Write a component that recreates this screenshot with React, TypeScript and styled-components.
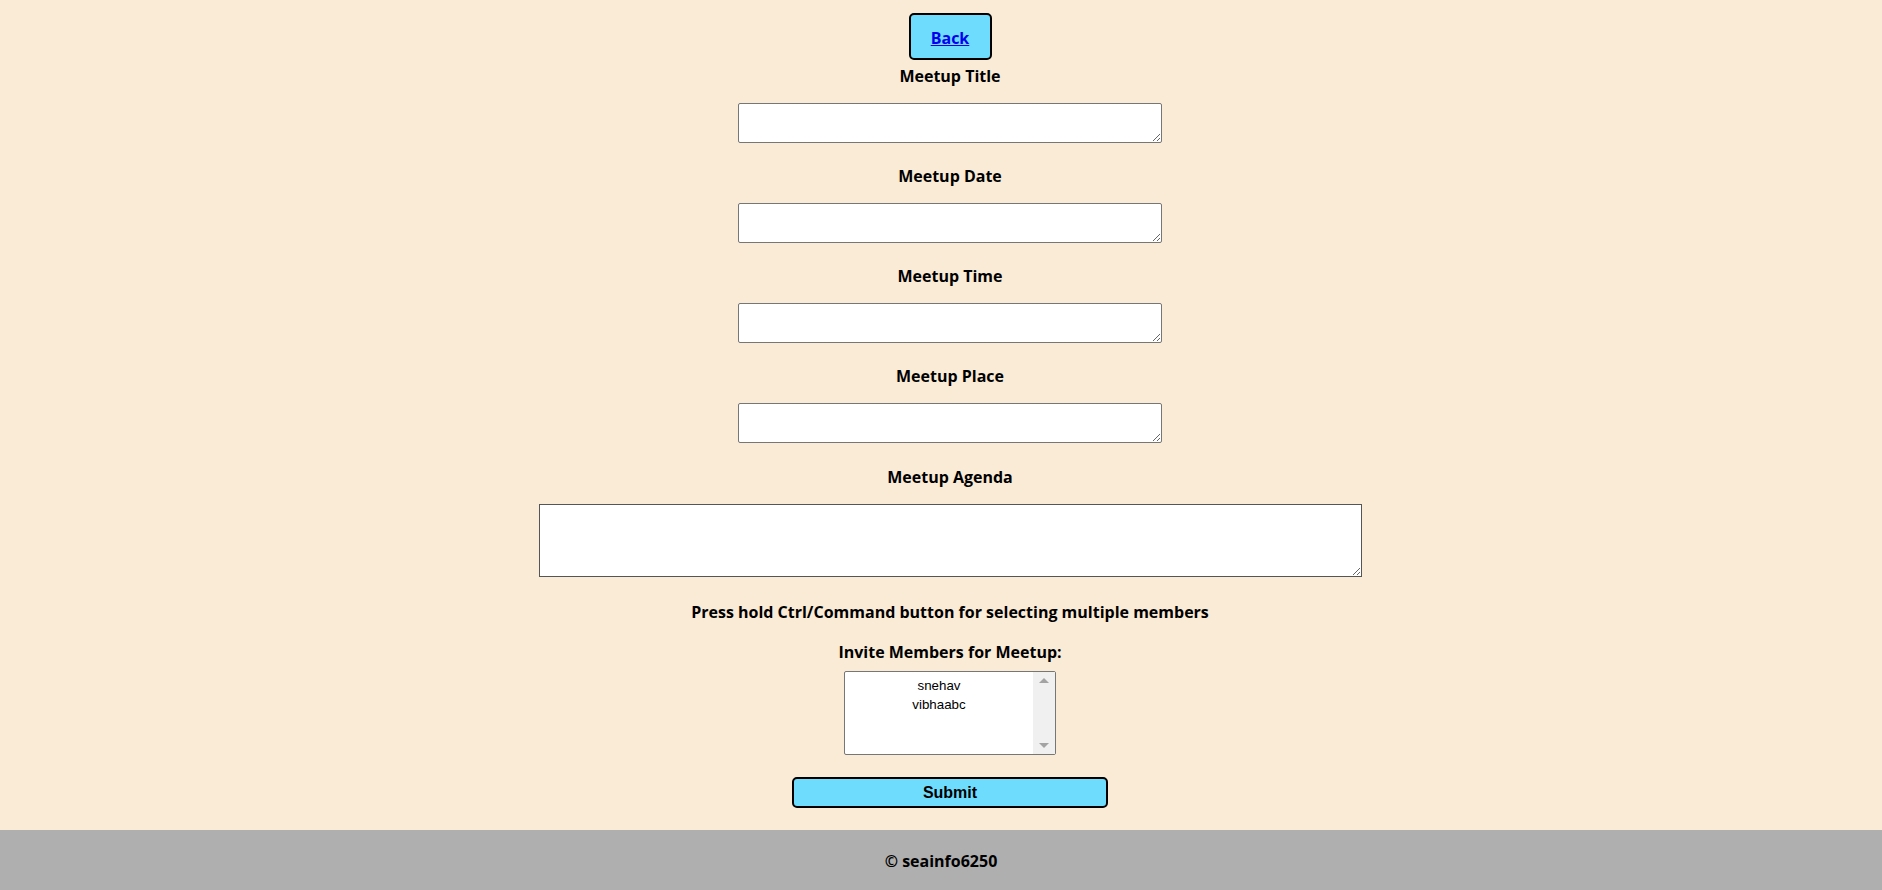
import React from "react";
import styled, { createGlobalStyle } from "styled-components";

const GlobalStyle = createGlobalStyle`
  html, body { margin: 0; padding: 0; }
  body {
    background: #faebd7;
    font-family: "Open Sans", "Noto Sans", sans-serif;
    color: #000;
  }
`;

const Page = styled.div`
  display: flex;
  flex-direction: column;
  min-height: 890px;
`;

const Main = styled.main`
  flex: 1;
  display: flex;
  flex-direction: column;
  align-items: center;
  padding: 13px 0 22px 18px;
`;

const BackButton = styled.button`
  width: 83px;
  height: 47px;
  box-sizing: border-box;
  background: #6edcfc;
  border: 2px solid #000;
  border-radius: 5px;
  display: flex;
  align-items: center;
  justify-content: center;
  padding: 2px 0 0;
  cursor: pointer;
`;

const BackLink = styled.a`
  font-family: "Open Sans", "Noto Sans", sans-serif;
  font-weight: 700;
  font-size: 16px;
  color: #0000ee;
  text-decoration: underline;
`;

const Label = styled.label<{ $top: number }>`
  display: block;
  margin-top: ${(p) => p.$top}px;
  height: 20px;
  line-height: 20px;
  font-weight: 700;
  font-size: 16px;
  text-align: center;
`;

const Field = styled.textarea<{ $wide?: boolean }>`
  box-sizing: border-box;
  margin-top: 17px;
  width: ${(p) => (p.$wide ? 823 : 424)}px;
  height: ${(p) => (p.$wide ? 73 : 40)}px;
  border: 1px solid ${(p) => (p.$wide ? "#555" : "#767676")};
  border-radius: ${(p) => (p.$wide ? 0 : 2)}px;
  background: #fff;
  font-family: monospace;
  font-size: 13px;
  display: block;
`;

const SelectBox = styled.div`
  margin-top: 9px;
  width: 212px;
  height: 84px;
  box-sizing: border-box;
  border: 1px solid #767676;
  border-radius: 2px;
  background: #fff;
  display: flex;
`;

const MemberList = styled.select`
  flex: 1;
  border: none;
  outline: none;
  padding: 5px 0 0;
  margin: 0;
  background: transparent;
  font-family: "Liberation Sans", Arial, sans-serif;
  font-size: 13.33px;
  text-align: center;
  text-align-last: center;
  overflow: hidden;
  color: #000;

  option {
    padding: 1px 2px 2px;
    text-align: center;
  }
`;

const ScrollTrack = styled.div`
  width: 22px;
  background: #f0f0f0;
  display: flex;
  flex-direction: column;
  justify-content: space-between;
  align-items: center;
  padding: 6px 0 6px;
`;

const Arrow = styled.div<{ $down?: boolean }>`
  width: 0;
  height: 0;
  border-left: 5px solid transparent;
  border-right: 5px solid transparent;
  ${(p) =>
    p.$down
      ? "border-top: 5px solid #a3a3a3;"
      : "border-bottom: 5px solid #a3a3a3;"}
`;

const SubmitButton = styled.button`
  margin-top: 22px;
  width: 316px;
  height: 31px;
  box-sizing: border-box;
  background: #6edcfc;
  border: 2px solid #000;
  border-radius: 5px;
  font-family: "Liberation Sans", Arial, sans-serif;
  font-weight: 700;
  font-size: 16px;
  color: #000;
  cursor: pointer;
`;

const Footer = styled.footer`
  height: 60px;
  background: #afafaf;
  display: flex;
  align-items: center;
  justify-content: center;
  padding-top: 2px;
  box-sizing: border-box;
  font-weight: 700;
  font-size: 16px;
`;

const fields = [
  { label: "Meetup Title", top: 6 },
  { label: "Meetup Date", top: 23 },
  { label: "Meetup Time", top: 23 },
  { label: "Meetup Place", top: 23 },
];

export default function App() {
  return (
    <Page>
      <GlobalStyle />
      <Main>
        <BackButton>
          <BackLink href="#">Back</BackLink>
        </BackButton>
        {fields.map((f) => (
          <React.Fragment key={f.label}>
            <Label $top={f.top}>{f.label}</Label>
            <Field />
          </React.Fragment>
        ))}
        <Label $top={24}>Meetup Agenda</Label>
        <Field $wide />
        <Label $top={25}>Press hold Ctrl/Command button for selecting multiple members</Label>
        <Label $top={20}>Invite Members for Meetup:</Label>
        <SelectBox>
          <MemberList multiple size={4}>
            <option>snehav</option>
            <option>vibhaabc</option>
          </MemberList>
          <ScrollTrack>
            <Arrow />
            <Arrow $down />
          </ScrollTrack>
        </SelectBox>
        <SubmitButton>Submit</SubmitButton>
      </Main>
      <Footer>© seainfo6250</Footer>
    </Page>
  );
}
